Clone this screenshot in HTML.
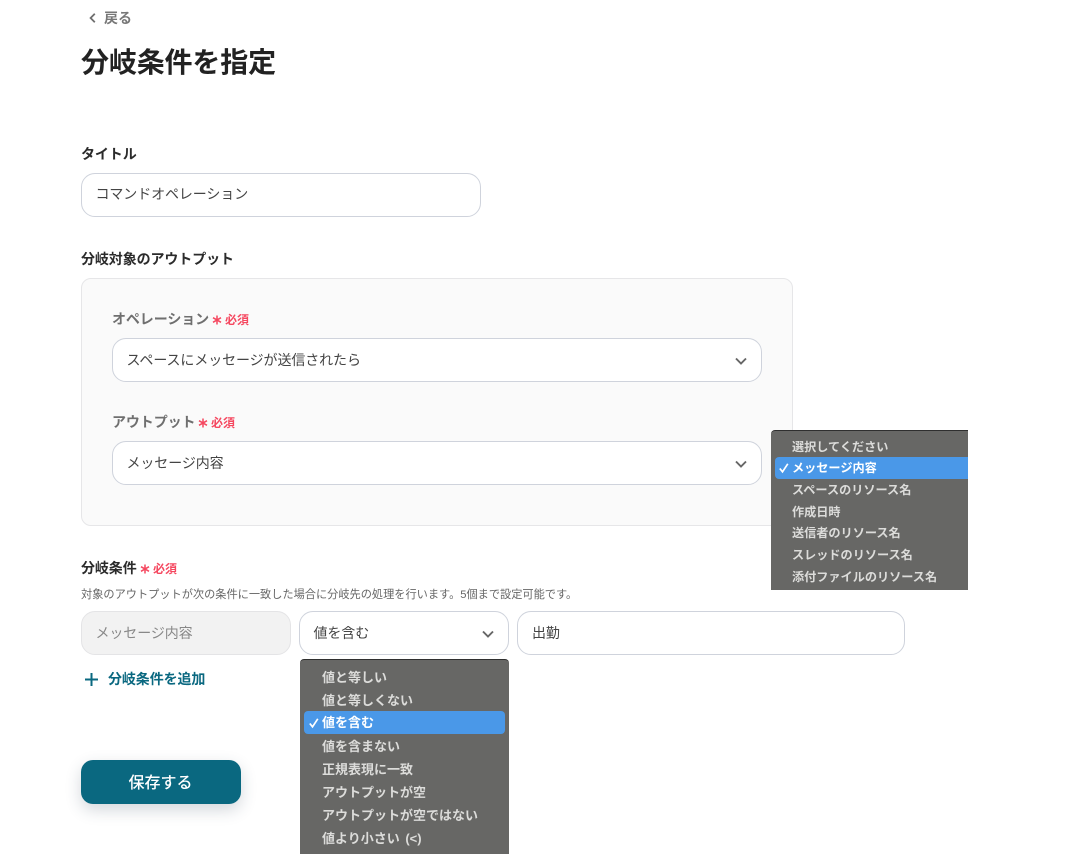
<!DOCTYPE html>
<html lang="ja"><head><meta charset="utf-8"><style>
html,body{margin:0;padding:0;background:#fff}
body{width:1071px;height:854px;position:relative;overflow:hidden;font-family:"Liberation Sans","Noto Sans CJK JP",sans-serif;color:#333}
.a{position:absolute;white-space:nowrap}
.t{position:absolute;white-space:nowrap;line-height:20px}
.box{position:absolute;box-sizing:border-box;border:1px solid #cfd3dc;border-radius:14px;background:#fff;height:44px}
.lb{font-size:14px;font-weight:700;color:#2b2b2b;letter-spacing:-.1px}
.v{font-size:14px;color:#444;letter-spacing:-.1px}
.gl{font-size:14px;font-weight:700;color:#6f6f6f;letter-spacing:-.1px}
.rq{font-size:12px;font-weight:700;color:#f5475f}
.menu{position:absolute;background:#676765;overflow:hidden;border-top:1px solid #2f2f2f;box-sizing:border-box}
.it{position:absolute;white-space:nowrap;font-size:13px;font-weight:700;color:#dcdcda;line-height:20px}
.s{font-size:12.15px}
.hl{position:absolute;background:#4a98e8}
svg{position:absolute;display:block}
</style></head><body>
<svg style="left:87px;top:12px" width="12" height="12" viewBox="0 0 12 12"><path d="M7.800 1.800L3.600 6l4.200 4.200" fill="none" stroke="#6f6f6f" stroke-width="1.800"/></svg>
<div class="t" style="left:104px;top:8px;font-size:14px;font-weight:700;color:#777">戻る</div>
<div class="t" style="left:81px;top:46px;font-size:28px;line-height:34px;font-weight:700;color:#222;letter-spacing:-.15px">分岐条件を指定</div>

<div class="t lb" style="left:81px;top:144px">タイトル</div>
<div class="box" style="left:81px;top:173px;width:400px"></div>
<div class="t v" style="left:95.500px;top:184px">コマンドオペレーション</div>

<div class="t lb" style="left:81px;top:249px">分岐対象のアウトプット</div>
<div class="a" style="left:81px;top:278px;width:712px;height:248px;box-sizing:border-box;background:#fafafa;border:1px solid #e6e6e8;border-radius:10px"></div>

<div class="t gl" style="left:112px;top:309px">オペレーション</div>
<svg style="left:212px;top:315px" width="10" height="10" viewBox="0 0 10 10"><path d="M5 .5v9M1 2.700l8 4.600M9 2.700l-8 4.600" fill="none" stroke="#f5475f" stroke-width="1.500"/></svg>
<div class="t rq" style="left:225px;top:310px">必須</div>
<div class="box" style="left:112px;top:338px;width:650px"></div>
<div class="t v" style="left:126.500px;top:350px">スペースにメッセージが送信されたら</div>
<svg style="left:734px;top:356px" width="14" height="10" viewBox="0 0 14 10"><path d="M2 2.500l5 5 5-5" fill="none" stroke="#666" stroke-width="1.900"/></svg>

<div class="t gl" style="left:112px;top:412px">アウトプット</div>
<svg style="left:198px;top:418px" width="10" height="10" viewBox="0 0 10 10"><path d="M5 .5v9M1 2.700l8 4.600M9 2.700l-8 4.600" fill="none" stroke="#f5475f" stroke-width="1.500"/></svg>
<div class="t rq" style="left:211px;top:413px">必須</div>
<div class="box" style="left:112px;top:441px;width:650px"></div>
<div class="t v" style="left:126.500px;top:453px">メッセージ内容</div>
<svg style="left:734px;top:459px" width="14" height="10" viewBox="0 0 14 10"><path d="M2 2.500l5 5 5-5" fill="none" stroke="#666" stroke-width="1.900"/></svg>

<div class="menu" style="left:771px;top:430px;width:197px;height:160px;border-top-left-radius:4px"></div>
<div class="hl" style="left:775px;top:457px;width:193px;height:22px;border-radius:4px 0 0 4px"></div>
<svg style="left:778px;top:462px" width="12" height="12" viewBox="0 0 12 12"><path d="M1.800 6.500L4.500 9.800 9.800 1.800" fill="none" stroke="#fff" stroke-width="1.700"/></svg>
<div class="it s" style="left:792px;top:437px">選択してください</div>
<div class="it s" style="left:792px;top:458px;color:#fff">メッセージ内容</div>
<div class="it s" style="left:792px;top:480px">スペースのリソース名</div>
<div class="it s" style="left:792px;top:502px">作成日時</div>
<div class="it s" style="left:792px;top:523px">送信者のリソース名</div>
<div class="it s" style="left:792px;top:545px">スレッドのリソース名</div>
<div class="it s" style="left:792px;top:567px">添付ファイルのリソース名</div>

<div class="t lb" style="left:81px;top:558px">分岐条件</div>
<svg style="left:140px;top:564px" width="10" height="10" viewBox="0 0 10 10"><path d="M5 .5v9M1 2.700l8 4.600M9 2.700l-8 4.600" fill="none" stroke="#f5475f" stroke-width="1.500"/></svg>
<div class="t rq" style="left:153px;top:559px">必須</div>
<div class="t" style="left:81px;top:585px;font-size:11.200px;color:#666">対象のアウトプットが次の条件に一致した場合に分岐先の処理を行います。5個まで設定可能です。</div>

<div class="box" style="left:81px;top:611px;width:210px;background:#f2f2f2;border-color:#e4e4e6"></div>
<div class="t v" style="left:95.500px;top:623px;color:#888">メッセージ内容</div>
<div class="box" style="left:299px;top:611px;width:210px"></div>
<div class="t v" style="left:313.500px;top:623px">値を含む</div>
<svg style="left:481px;top:629px" width="14" height="10" viewBox="0 0 14 10"><path d="M2 2.500l5 5 5-5" fill="none" stroke="#666" stroke-width="1.900"/></svg>
<div class="box" style="left:517px;top:611px;width:388px"></div>
<div class="t v" style="left:532px;top:623px">出勤</div>

<svg style="left:84px;top:672px" width="15" height="15" viewBox="0 0 15 15"><path d="M7.500 1v13M1 7.500h13" fill="none" stroke="#0a6880" stroke-width="2"/></svg>
<div class="t" style="left:108px;top:669px;font-size:14px;font-weight:700;color:#0a6880;letter-spacing:-.1px">分岐条件を追加</div>

<div class="menu" style="left:300px;top:659px;width:209px;height:195px;border-radius:4px 4px 0 0"></div>
<div class="hl" style="left:304px;top:711px;width:201px;height:23px;border-radius:4px"></div>
<svg style="left:308px;top:717px" width="12" height="12" viewBox="0 0 12 12"><path d="M1.800 6.500L4.500 9.800 9.800 1.800" fill="none" stroke="#fff" stroke-width="1.700"/></svg>
<div class="it" style="left:322px;top:668px">値と等しい</div>
<div class="it" style="left:322px;top:691px">値と等しくない</div>
<div class="it" style="left:322px;top:713px;color:#fff">値を含む</div>
<div class="it" style="left:322px;top:737px">値を含まない</div>
<div class="it" style="left:322px;top:760px">正規表現に一致</div>
<div class="it" style="left:322px;top:783px">アウトプットが空</div>
<div class="it" style="left:322px;top:806px">アウトプットが空ではない</div>
<div class="it" style="left:322px;top:829px;word-spacing:2px">値より小さい (&lt;)</div>

<div class="a" style="left:81px;top:760px;width:160px;height:44px;border-radius:12px;background:#0a6880;box-shadow:0 6px 16px rgba(40,60,80,.2)"></div>
<div class="t" style="left:80.500px;top:774px;width:160px;text-align:center;font-size:16px;font-weight:500;color:#fff">保存する</div>
</body></html>
